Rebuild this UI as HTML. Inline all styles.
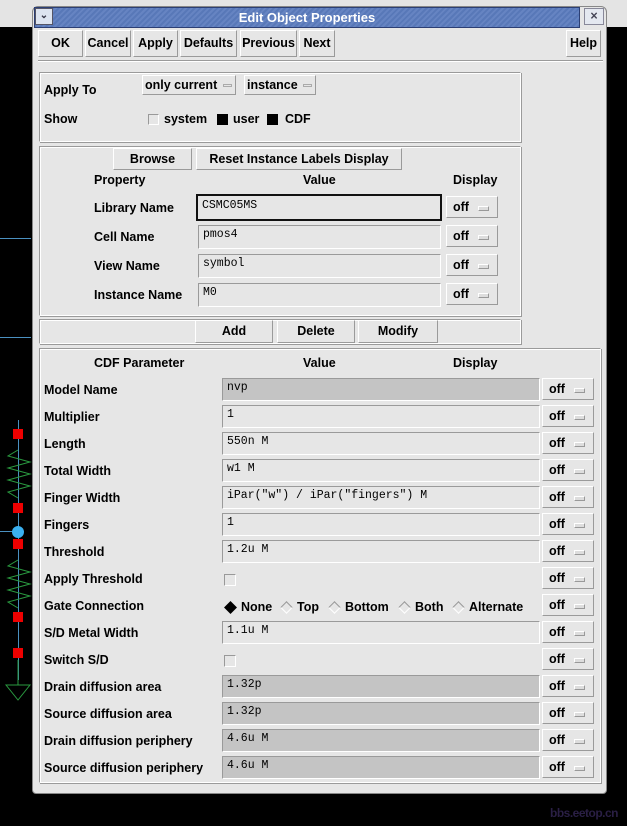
<!DOCTYPE html><html><head><style>
body{margin:0;width:627px;height:826px;background:#000;position:relative;overflow:hidden;font-family:"Liberation Sans",sans-serif;font-size:12.5px;font-weight:bold;color:#000}
div,span{position:absolute;box-sizing:border-box}
.btn{background:#e6e6e6;border:1px solid;border-color:#fff #9a9a9a #9a9a9a #fff;text-align:center;line-height:24px}
.box{border:1px solid;border-color:#9a9a9a #fff #fff #9a9a9a;box-shadow:inset 1px 1px 0 #fff,1px 1px 0 #9a9a9a}
.l{line-height:16px}
.f{border:1px solid;border-color:#9a9a9a #fff #fff #9a9a9a;background:#e6e6e6;font-family:"Liberation Mono",monospace;font-weight:normal;font-size:11.5px;padding-left:4px;line-height:18px}
.g{background:#c4c4c4}
.off{background:#e6e6e6;border:1px solid;border-color:#fff #9a9a9a #9a9a9a #fff;height:22px;width:52px;line-height:20px;padding-left:6px}
.off:after{content:"";position:absolute;right:8px;top:9px;width:9px;height:3px;border:1px solid;border-color:#fff #999 #999 #fff;background:#ddd}
.rd{width:9px;height:9px;transform:rotate(45deg);border:1px solid;border-color:#999 #fff #fff #999;top:4px}
</style></head><body>
<div style="left:0;top:0;width:627px;height:27px;background:#e4e4e4"></div>
<div style="left:0;top:238px;width:31px;height:1px;background:#4a90c0"></div>
<div style="left:0;top:337px;width:31px;height:1px;background:#4a90c0"></div>
<div style="left:0;top:531px;width:18px;height:1px;background:#4a90c0"></div>
<div style="left:18px;top:420px;width:1px;height:260px;background:#4a90c0"></div>
<svg style="position:absolute;left:0;top:420px" width="32" height="290"><polyline points="18,30 8,36 30,42 8,48 30,54 8,60 30,66 8,72 18,78" fill="none" stroke="#2a9a40"/><polyline points="18,140 8,146 30,152 8,158 30,164 8,170 30,176 8,182 18,188" fill="none" stroke="#2a9a40"/><line x1="18" y1="240" x2="18" y2="265" stroke="#2a9a40"/><polygon points="6,265 30,265 18,280" fill="none" stroke="#2a9a40"/><circle cx="18" cy="112" r="6" fill="#3ab0f0"/></svg>
<div style="left:13px;top:429px;width:10px;height:10px;background:#e00"></div>
<div style="left:13px;top:503px;width:10px;height:10px;background:#e00"></div>
<div style="left:13px;top:539px;width:10px;height:10px;background:#e00"></div>
<div style="left:13px;top:612px;width:10px;height:10px;background:#e00"></div>
<div style="left:13px;top:648px;width:10px;height:10px;background:#e00"></div>
<span style="left:550px;top:806px;color:#2a1f45;font-size:12px;letter-spacing:-0.5px">bbs.eetop.cn</span>
<div style="left:32px;top:6px;width:575px;height:788px;background:#e6e6e6;border:1px solid #888;border-radius:6px 6px 4px 4px"></div>
<div style="left:34px;top:7px;width:546px;height:21px;background:repeating-linear-gradient(135deg,#5878b8 0 2px,#6684c2 2px 4px);border:1px solid #2c3f74;color:#fff;text-align:center;line-height:19px;font-size:13px">Edit Object Properties</div>
<div style="left:35px;top:8px;width:18px;height:17px;background:#dde4f0;border:1px solid #556;font-size:10px;text-align:center;line-height:14px;color:#334">&#8964;</div>
<div style="left:584px;top:8px;width:20px;height:17px;background:#e4e8f0;border:1px solid #889;text-align:center;line-height:15px;color:#445">&#215;</div>
<div class="btn" style="left:38px;top:30px;width:45px;height:27px">OK</div>
<div class="btn" style="left:85px;top:30px;width:46px;height:27px">Cancel</div>
<div class="btn" style="left:133px;top:30px;width:45px;height:27px">Apply</div>
<div class="btn" style="left:180px;top:30px;width:57px;height:27px">Defaults</div>
<div class="btn" style="left:240px;top:30px;width:57px;height:27px">Previous</div>
<div class="btn" style="left:299px;top:30px;width:36px;height:27px">Next</div>
<div class="btn" style="left:566px;top:30px;width:35px;height:27px">Help</div>
<div style="left:38px;top:60px;width:565px;height:2px;border-top:1px solid #9a9a9a;border-bottom:1px solid #fff"></div>
<div class="box" style="left:39px;top:72px;width:482px;height:70px"></div>
<span class="l" style="left:44px;top:82px">Apply To</span>
<span class="l" style="left:44px;top:111px">Show</span>
<div class="btn" style="left:142px;top:75px;width:94px;height:20px;line-height:18px;text-align:left;padding-left:2px">only current <span style="left:80px;top:8px;width:9px;height:3px;border:1px solid #aaa"></span></div>
<div class="btn" style="left:244px;top:75px;width:72px;height:20px;line-height:18px;text-align:left;padding-left:2px">instance <span style="left:58px;top:8px;width:9px;height:3px;border:1px solid #aaa"></span></div>
<div style="left:148px;top:114px;width:11px;height:11px;border:1px solid;border-color:#999 #fff #fff #999"></div>
<span class="l" style="left:164px;top:111px">system</span>
<div style="left:217px;top:114px;width:11px;height:11px;background:#000"></div>
<span class="l" style="left:233px;top:111px">user</span>
<div style="left:267px;top:114px;width:11px;height:11px;background:#000"></div>
<span class="l" style="left:285px;top:111px">CDF</span>
<div class="box" style="left:39px;top:146px;width:482px;height:170px"></div>
<div class="btn" style="left:113px;top:148px;width:79px;height:22px;line-height:20px">Browse</div>
<div class="btn" style="left:196px;top:148px;width:206px;height:22px;line-height:20px">Reset Instance Labels Display</div>
<span class="l" style="left:94px;top:172px">Property</span>
<span class="l" style="left:303px;top:172px">Value</span>
<span class="l" style="left:453px;top:172px">Display</span>
<span class="l" style="left:94px;top:200px">Library Name</span>
<span class="l" style="left:94px;top:229px">Cell Name</span>
<span class="l" style="left:94px;top:258px">View Name</span>
<span class="l" style="left:94px;top:287px">Instance Name</span>
<div class="f" style="left:196px;top:194px;width:246px;height:27px;border:2px solid #111;line-height:20px">CSMC05MS</div>
<div class="f" style="left:198px;top:225px;width:243px;height:24px">pmos4</div>
<div class="f" style="left:198px;top:254px;width:243px;height:24px">symbol</div>
<div class="f" style="left:198px;top:283px;width:243px;height:24px">M0</div>
<div class="off" style="left:446px;top:196px">off</div>
<div class="off" style="left:446px;top:225px">off</div>
<div class="off" style="left:446px;top:254px">off</div>
<div class="off" style="left:446px;top:283px">off</div>
<div class="box" style="left:39px;top:319px;width:482px;height:25px"></div>
<div class="btn" style="left:195px;top:320px;width:78px;height:23px;line-height:21px">Add</div>
<div class="btn" style="left:277px;top:320px;width:78px;height:23px;line-height:21px">Delete</div>
<div class="btn" style="left:358px;top:320px;width:80px;height:23px;line-height:21px">Modify</div>
<div class="box" style="left:39px;top:348px;width:562px;height:435px"></div>
<span class="l" style="left:94px;top:355px">CDF Parameter</span>
<span class="l" style="left:303px;top:355px">Value</span>
<span class="l" style="left:453px;top:355px">Display</span>
<span class="l" style="left:44px;top:382px">Model Name</span>
<span class="l" style="left:44px;top:409px">Multiplier</span>
<span class="l" style="left:44px;top:436px">Length</span>
<span class="l" style="left:44px;top:463px">Total Width</span>
<span class="l" style="left:44px;top:490px">Finger Width</span>
<span class="l" style="left:44px;top:517px">Fingers</span>
<span class="l" style="left:44px;top:544px">Threshold</span>
<span class="l" style="left:44px;top:571px">Apply Threshold</span>
<span class="l" style="left:44px;top:598px">Gate Connection</span>
<span class="l" style="left:44px;top:625px">S/D Metal Width</span>
<span class="l" style="left:44px;top:652px">Switch S/D</span>
<span class="l" style="left:44px;top:679px">Drain diffusion area</span>
<span class="l" style="left:44px;top:706px">Source diffusion area</span>
<span class="l" style="left:44px;top:733px">Drain diffusion periphery</span>
<span class="l" style="left:44px;top:760px">Source diffusion periphery</span>
<div class="f g" style="left:222px;top:378px;width:318px;height:23px">nvp</div>
<div class="f" style="left:222px;top:405px;width:318px;height:23px">1</div>
<div class="f" style="left:222px;top:432px;width:318px;height:23px">550n M</div>
<div class="f" style="left:222px;top:459px;width:318px;height:23px">w1 M</div>
<div class="f" style="left:222px;top:486px;width:318px;height:23px">iPar("w") / iPar("fingers") M</div>
<div class="f" style="left:222px;top:513px;width:318px;height:23px">1</div>
<div class="f" style="left:222px;top:540px;width:318px;height:23px">1.2u M</div>
<div style="left:224px;top:574px;width:12px;height:12px;border:1px solid;border-color:#999 #fff #fff #999"></div>
<div class="rd" style="left:226px;top:603px;background:#000;border-color:#000"></div><span class="l" style="left:241px;top:599px">None</span>
<div class="rd" style="left:282px;top:603px"></div><span class="l" style="left:297px;top:599px">Top</span>
<div class="rd" style="left:330px;top:603px"></div><span class="l" style="left:345px;top:599px">Bottom</span>
<div class="rd" style="left:400px;top:603px"></div><span class="l" style="left:415px;top:599px">Both</span>
<div class="rd" style="left:454px;top:603px"></div><span class="l" style="left:469px;top:599px">Alternate</span>
<div class="f" style="left:222px;top:621px;width:318px;height:23px">1.1u M</div>
<div style="left:224px;top:655px;width:12px;height:12px;border:1px solid;border-color:#999 #fff #fff #999"></div>
<div class="f g" style="left:222px;top:675px;width:318px;height:23px">1.32p</div>
<div class="f g" style="left:222px;top:702px;width:318px;height:23px">1.32p</div>
<div class="f g" style="left:222px;top:729px;width:318px;height:23px">4.6u M</div>
<div class="f g" style="left:222px;top:756px;width:318px;height:23px">4.6u M</div>
<div class="off" style="left:542px;top:378px">off</div>
<div class="off" style="left:542px;top:405px">off</div>
<div class="off" style="left:542px;top:432px">off</div>
<div class="off" style="left:542px;top:459px">off</div>
<div class="off" style="left:542px;top:486px">off</div>
<div class="off" style="left:542px;top:513px">off</div>
<div class="off" style="left:542px;top:540px">off</div>
<div class="off" style="left:542px;top:567px">off</div>
<div class="off" style="left:542px;top:594px">off</div>
<div class="off" style="left:542px;top:621px">off</div>
<div class="off" style="left:542px;top:648px">off</div>
<div class="off" style="left:542px;top:675px">off</div>
<div class="off" style="left:542px;top:702px">off</div>
<div class="off" style="left:542px;top:729px">off</div>
<div class="off" style="left:542px;top:756px">off</div>
</body></html>
